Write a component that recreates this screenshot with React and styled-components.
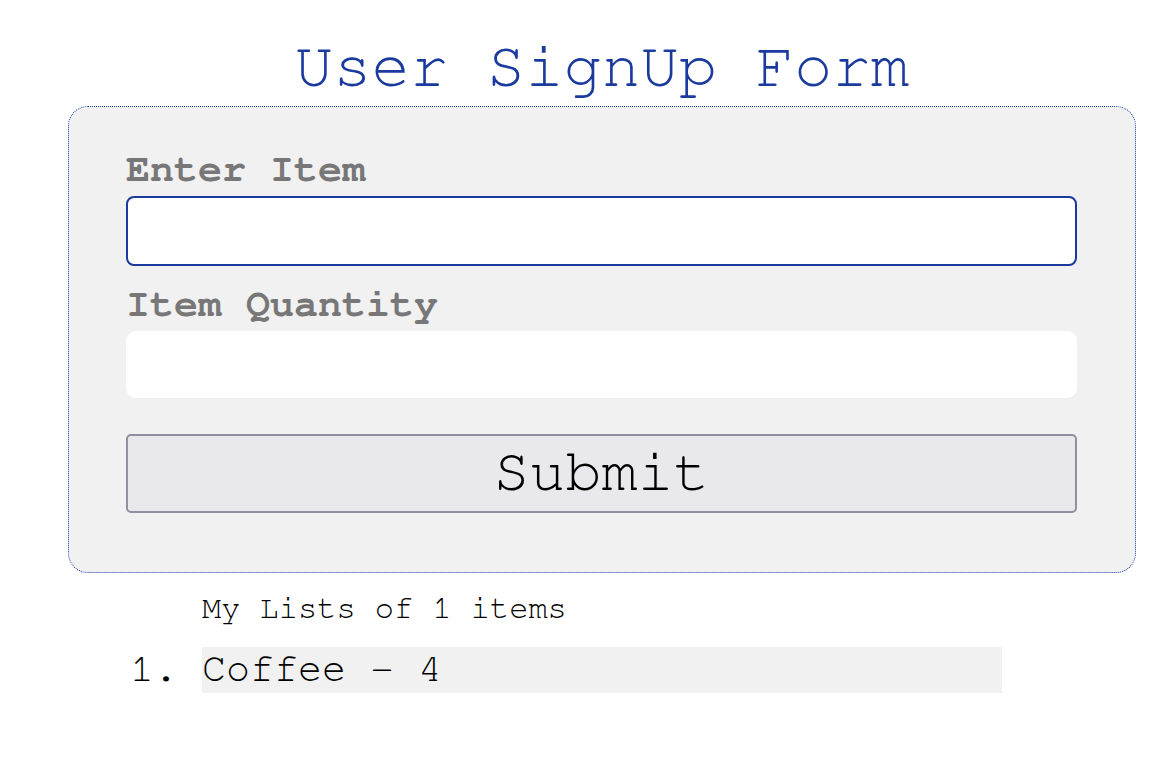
import React from 'react';
import styled, { createGlobalStyle } from 'styled-components';

const mono = `"Nimbus Mono PS", "Nimbus Mono L", "FreeMono", "Courier 10 Pitch", "Courier", "Liberation Mono", "Courier New", monospace`;

const GlobalStyle = createGlobalStyle`
  body {
    margin: 0;
    background: #ffffff;
    font-family: ${mono};
  }
`;

const Page = styled.div`
  width: 1150px;
  padding-top: 28px;
`;

const Header = styled.div`
  padding-left: 68px;
  width: 1068px;
`;

const Title = styled.h1`
  margin: 0;
  text-align: center;
  font-size: 64px;
  font-weight: normal;
  color: #1a3a9e;
  line-height: 78px;
`;

const Card = styled.form`
  box-sizing: border-box;
  margin-left: 68px;
  width: 1068px;
  padding: 43px 58px 59px 57px;
  background: #f1f1f1;
  border: 1px dotted #1c3fae;
  border-radius: 20px;
  display: flex;
  flex-direction: column;
`;

const Label = styled.label`
  font-size: 40px;
  font-weight: bold;
  color: #777777;
  line-height: 39px;
  padding-bottom: 7px;
  margin-top: ${p => p.$gap || 0}px;
`;

const Input = styled.input`
  box-sizing: border-box;
  width: 100%;
  height: ${p => p.$h}px;
  background: #ffffff;
  border: ${p => (p.$focused ? '2px solid #1a3a9e' : 'none')};
  border-radius: ${p => (p.$focused ? 8 : 10)}px;
  outline: none;
  font-family: inherit;
  font-size: 32px;
  padding: 0 12px;
`;

const Button = styled.button`
  box-sizing: border-box;
  margin-top: 36px;
  height: 79px;
  width: 100%;
  background: #e9e9ed;
  border: 2px solid #8f8f9d;
  border-radius: 5px;
  font-family: ${mono};
  font-size: 60px;
  line-height: 1;
  color: #000000;
  padding: 0 0 3px;
`;

const ListSection = styled.section`
  padding-left: 202px;
  margin-top: 17px;
`;

const ListHeading = styled.p`
  margin: 0;
  font-size: 32px;
  line-height: 36px;
  color: #000000;
`;

const List = styled.ol`
  margin: 21px 0 0;
  padding: 0;
  list-style: decimal outside;
`;

const Item = styled.li`
  width: 800px;
  height: 46px;
  background: #f1f1f1;
  font-size: 40px;
  line-height: 44px;
  color: #000000;
`;

const items = [{ name: 'Coffee', qty: 4 }];

export default function App() {
  return (
    <Page>
      <GlobalStyle />
      <Header>
        <Title>User SignUp Form</Title>
      </Header>
      <Card onSubmit={e => e.preventDefault()}>
        <Label>Enter Item</Label>
        <Input $focused $h={70} />
        <Label $gap={19}>Item Quantity</Label>
        <Input $h={67} />
        <Button type="submit">Submit</Button>
      </Card>
      <ListSection>
        <ListHeading>My Lists of {items.length} items</ListHeading>
        <List>
          {items.map(it => (
            <Item key={it.name}>{it.name} - {it.qty}</Item>
          ))}
        </List>
      </ListSection>
    </Page>
  );
}
